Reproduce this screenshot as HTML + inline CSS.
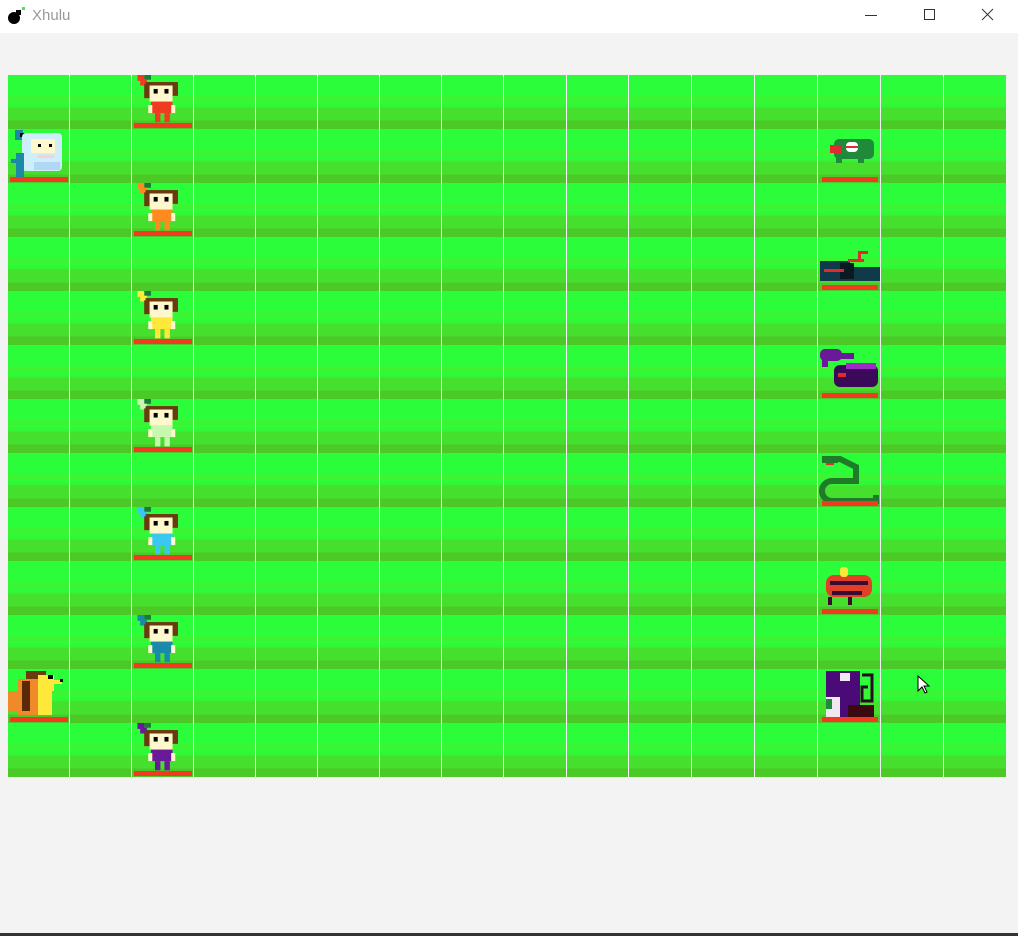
<!DOCTYPE html>
<html><head><meta charset="utf-8"><style>
html,body{margin:0;padding:0;background:#f3f3f3;width:1018px;height:936px;overflow:hidden;font-family:"Liberation Sans",sans-serif;position:relative}
.tb{position:absolute;left:0;top:0;width:1018px;height:33px;background:#fff}
.title{position:absolute;left:32px;top:7px;font-size:15px;color:#999}
.col{position:absolute;top:75px;height:702px;background-image:linear-gradient(#2bfd3a 0,#2bfd3a 40%,#3df332 40%,#3df332 50%,#2bfd3a 50%,#36f235 60%,#45df2d 60%,#45df2d 84%,#4bc927 84%,#4bc927 100%);background-size:100% 54px}
.s{position:absolute;width:62px;height:54px}
.bot{position:absolute;left:0;top:933px;width:1018px;height:3px;background:#333}
</style></head><body>
<div class="tb">
<svg style="position:absolute;left:6px;top:6px" width="22" height="20"><circle cx="8" cy="12" r="6" fill="#000"/><rect x="10" y="4" width="5" height="5" fill="#000"/><rect x="16" y="1" width="3" height="3" fill="#5d5"/></svg>
<div class="title">Xhulu</div>
<svg style="position:absolute;left:864px;top:8px" width="140" height="16"><line x1="1" y1="7.5" x2="13" y2="7.5" stroke="#333"/><rect x="60.5" y="1.5" width="10" height="10" fill="none" stroke="#333"/><path d="M118 1L129 12M129 1L118 12" stroke="#333"/></svg>
</div>
<div class="col" style="left:8px;width:61px"></div>
<div class="col" style="left:70px;width:61px"></div>
<div class="col" style="left:132px;width:61px"></div>
<div class="col" style="left:194px;width:61px"></div>
<div class="col" style="left:256px;width:61px"></div>
<div class="col" style="left:318px;width:61px"></div>
<div class="col" style="left:380px;width:61px"></div>
<div class="col" style="left:442px;width:61px"></div>
<div class="col" style="left:504px;width:62px"></div>
<div class="col" style="left:567px;width:61px"></div>
<div class="col" style="left:629px;width:62px"></div>
<div class="col" style="left:692px;width:62px"></div>
<div class="col" style="left:755px;width:62px"></div>
<div class="col" style="left:818px;width:62px"></div>
<div class="col" style="left:881px;width:62px"></div>
<div class="col" style="left:944px;width:62px"></div>

<!-- people -->
<svg class="s" style="left:132px;top:75px;color:#f03a22" viewBox="0 0 62 54"><g transform="translate(-4,-1) scale(1.35,1.15)"><rect x="12" y="0" width="5" height="5" fill="#1a7a3a"/><rect x="7" y="0" width="5" height="6" fill="currentColor"/><rect x="9" y="5" width="5" height="5" fill="currentColor"/><rect x="13" y="7" width="24" height="3" fill="#6b3a10"/><rect x="12" y="9" width="4" height="12" fill="#6b3a10"/><rect x="33" y="9" width="4" height="10" fill="#6b3a10"/><rect x="16" y="10" width="17" height="14" fill="#fff8cc"/><rect x="19" y="13" width="3" height="4" fill="#000"/><rect x="27" y="13" width="3" height="4" fill="#000"/><rect x="17" y="24" width="16" height="10" fill="currentColor"/><rect x="15" y="27" width="3" height="7" fill="#fff8cc"/><rect x="32" y="27" width="3" height="7" fill="#fff8cc"/><rect x="20" y="34" width="4" height="8" fill="currentColor"/><rect x="27" y="34" width="4" height="8" fill="currentColor"/></g><rect x="2" y="48" width="58" height="5" fill="#f03a22"/></svg>
<svg class="s" style="left:132px;top:183px;color:#ff8a20" viewBox="0 0 62 54"><g transform="translate(-4,-1) scale(1.35,1.15)"><rect x="12" y="0" width="5" height="5" fill="#1a7a3a"/><rect x="7" y="0" width="5" height="6" fill="currentColor"/><rect x="9" y="5" width="5" height="5" fill="currentColor"/><rect x="13" y="7" width="24" height="3" fill="#6b3a10"/><rect x="12" y="9" width="4" height="12" fill="#6b3a10"/><rect x="33" y="9" width="4" height="10" fill="#6b3a10"/><rect x="16" y="10" width="17" height="14" fill="#fff8cc"/><rect x="19" y="13" width="3" height="4" fill="#000"/><rect x="27" y="13" width="3" height="4" fill="#000"/><rect x="17" y="24" width="16" height="10" fill="currentColor"/><rect x="15" y="27" width="3" height="7" fill="#fff8cc"/><rect x="32" y="27" width="3" height="7" fill="#fff8cc"/><rect x="20" y="34" width="4" height="8" fill="currentColor"/><rect x="27" y="34" width="4" height="8" fill="currentColor"/></g><rect x="2" y="48" width="58" height="5" fill="#f03a22"/></svg>
<svg class="s" style="left:132px;top:291px;color:#ffe83a" viewBox="0 0 62 54"><g transform="translate(-4,-1) scale(1.35,1.15)"><rect x="12" y="0" width="5" height="5" fill="#1a7a3a"/><rect x="7" y="0" width="5" height="6" fill="currentColor"/><rect x="9" y="5" width="5" height="5" fill="currentColor"/><rect x="13" y="7" width="24" height="3" fill="#6b3a10"/><rect x="12" y="9" width="4" height="12" fill="#6b3a10"/><rect x="33" y="9" width="4" height="10" fill="#6b3a10"/><rect x="16" y="10" width="17" height="14" fill="#fff8cc"/><rect x="19" y="13" width="3" height="4" fill="#000"/><rect x="27" y="13" width="3" height="4" fill="#000"/><rect x="17" y="24" width="16" height="10" fill="currentColor"/><rect x="15" y="27" width="3" height="7" fill="#fff8cc"/><rect x="32" y="27" width="3" height="7" fill="#fff8cc"/><rect x="20" y="34" width="4" height="8" fill="currentColor"/><rect x="27" y="34" width="4" height="8" fill="currentColor"/></g><rect x="2" y="48" width="58" height="5" fill="#f03a22"/></svg>
<svg class="s" style="left:132px;top:399px;color:#c8f8b0" viewBox="0 0 62 54"><g transform="translate(-4,-1) scale(1.35,1.15)"><rect x="12" y="0" width="5" height="5" fill="#1a7a3a"/><rect x="7" y="0" width="5" height="6" fill="currentColor"/><rect x="9" y="5" width="5" height="5" fill="currentColor"/><rect x="13" y="7" width="24" height="3" fill="#6b3a10"/><rect x="12" y="9" width="4" height="12" fill="#6b3a10"/><rect x="33" y="9" width="4" height="10" fill="#6b3a10"/><rect x="16" y="10" width="17" height="14" fill="#fff8cc"/><rect x="19" y="13" width="3" height="4" fill="#000"/><rect x="27" y="13" width="3" height="4" fill="#000"/><rect x="17" y="24" width="16" height="10" fill="currentColor"/><rect x="15" y="27" width="3" height="7" fill="#fff8cc"/><rect x="32" y="27" width="3" height="7" fill="#fff8cc"/><rect x="20" y="34" width="4" height="8" fill="currentColor"/><rect x="27" y="34" width="4" height="8" fill="currentColor"/></g><rect x="2" y="48" width="58" height="5" fill="#f03a22"/></svg>
<svg class="s" style="left:132px;top:507px;color:#3ac8f0" viewBox="0 0 62 54"><g transform="translate(-4,-1) scale(1.35,1.15)"><rect x="12" y="0" width="5" height="5" fill="#1a7a3a"/><rect x="7" y="0" width="5" height="6" fill="currentColor"/><rect x="9" y="5" width="5" height="5" fill="currentColor"/><rect x="13" y="7" width="24" height="3" fill="#6b3a10"/><rect x="12" y="9" width="4" height="12" fill="#6b3a10"/><rect x="33" y="9" width="4" height="10" fill="#6b3a10"/><rect x="16" y="10" width="17" height="14" fill="#fff8cc"/><rect x="19" y="13" width="3" height="4" fill="#000"/><rect x="27" y="13" width="3" height="4" fill="#000"/><rect x="17" y="24" width="16" height="10" fill="currentColor"/><rect x="15" y="27" width="3" height="7" fill="#fff8cc"/><rect x="32" y="27" width="3" height="7" fill="#fff8cc"/><rect x="20" y="34" width="4" height="8" fill="currentColor"/><rect x="27" y="34" width="4" height="8" fill="currentColor"/></g><rect x="2" y="48" width="58" height="5" fill="#f03a22"/></svg>
<svg class="s" style="left:132px;top:615px;color:#1a8aa8" viewBox="0 0 62 54"><g transform="translate(-4,-1) scale(1.35,1.15)"><rect x="12" y="0" width="5" height="5" fill="#1a7a3a"/><rect x="7" y="0" width="5" height="6" fill="currentColor"/><rect x="9" y="5" width="5" height="5" fill="currentColor"/><rect x="13" y="7" width="24" height="3" fill="#6b3a10"/><rect x="12" y="9" width="4" height="12" fill="#6b3a10"/><rect x="33" y="9" width="4" height="10" fill="#6b3a10"/><rect x="16" y="10" width="17" height="14" fill="#fff8cc"/><rect x="19" y="13" width="3" height="4" fill="#000"/><rect x="27" y="13" width="3" height="4" fill="#000"/><rect x="17" y="24" width="16" height="10" fill="currentColor"/><rect x="15" y="27" width="3" height="7" fill="#fff8cc"/><rect x="32" y="27" width="3" height="7" fill="#fff8cc"/><rect x="20" y="34" width="4" height="8" fill="currentColor"/><rect x="27" y="34" width="4" height="8" fill="currentColor"/></g><rect x="2" y="48" width="58" height="5" fill="#f03a22"/></svg>
<svg class="s" style="left:132px;top:723px;color:#6a1a98" viewBox="0 0 62 54"><g transform="translate(-4,-1) scale(1.35,1.15)"><rect x="12" y="0" width="5" height="5" fill="#1a7a3a"/><rect x="7" y="0" width="5" height="6" fill="currentColor"/><rect x="9" y="5" width="5" height="5" fill="currentColor"/><rect x="13" y="7" width="24" height="3" fill="#6b3a10"/><rect x="12" y="9" width="4" height="12" fill="#6b3a10"/><rect x="33" y="9" width="4" height="10" fill="#6b3a10"/><rect x="16" y="10" width="17" height="14" fill="#fff8cc"/><rect x="19" y="13" width="3" height="4" fill="#000"/><rect x="27" y="13" width="3" height="4" fill="#000"/><rect x="17" y="24" width="16" height="10" fill="currentColor"/><rect x="15" y="27" width="3" height="7" fill="#fff8cc"/><rect x="32" y="27" width="3" height="7" fill="#fff8cc"/><rect x="20" y="34" width="4" height="8" fill="currentColor"/><rect x="27" y="34" width="4" height="8" fill="currentColor"/></g><rect x="2" y="48" width="58" height="5" fill="#f03a22"/></svg>

<!-- ghost -->
<svg class="s" style="left:8px;top:129px" viewBox="0 0 62 54"><rect x="7" y="1" width="8" height="10" fill="#1a8aa8"/><rect x="12" y="4" width="5" height="4" fill="#000"/><rect x="14" y="4" width="40" height="38" rx="4" fill="#cfeefc" /><rect x="23" y="10" width="24" height="14" fill="#fff8cc"/><rect x="30" y="15" width="3" height="3" fill="#000"/><rect x="41" y="15" width="3" height="3" fill="#000"/><rect x="30" y="26" width="16" height="3" fill="#f8d0d0"/><rect x="3" y="30" width="8" height="4" fill="#1a8aa8"/><rect x="8" y="24" width="8" height="24" fill="#1a8aa8"/><rect x="26" y="33" width="26" height="8" fill="#b0d8f4"/><rect x="2" y="48" width="58" height="5" fill="#f03a22"/></svg>
<!-- dino -->
<svg class="s" style="left:8px;top:669px" viewBox="0 0 62 54"><rect x="18" y="2" width="20" height="10" fill="#6b3a10"/><rect x="10" y="10" width="22" height="36" fill="#f08a28"/><rect x="0" y="22" width="14" height="20" fill="#f08a28"/><rect x="14" y="12" width="8" height="30" fill="#5a2a08"/><rect x="30" y="6" width="16" height="16" fill="#ffe83a"/><rect x="40" y="6" width="5" height="4" fill="#000"/><rect x="46" y="11" width="8" height="4" fill="#ffe83a"/><rect x="52" y="10" width="3" height="3" fill="#000"/><rect x="30" y="22" width="14" height="24" fill="#ffe83a"/><rect x="2" y="48" width="58" height="5" fill="#f03a22"/></svg>

<!-- monsters col 13 -->
<svg class="s" style="left:818px;top:129px" viewBox="0 0 62 54"><rect x="16" y="10" width="40" height="20" rx="5" fill="#1f8a3a"/><rect x="12" y="16" width="12" height="8" fill="#e02a30"/><rect x="28" y="13" width="12" height="10" rx="4" fill="#fff"/><rect x="28" y="17" width="12" height="2" fill="#e02a30"/><rect x="18" y="28" width="6" height="6" fill="#1f8a3a"/><rect x="40" y="28" width="6" height="6" fill="#1f8a3a"/><rect x="4" y="48" width="56" height="5" fill="#f03a22"/></svg>
<svg class="s" style="left:818px;top:237px" viewBox="0 0 62 54"><rect x="2" y="30" width="60" height="14" fill="#0e3a4a"/><rect x="2" y="24" width="30" height="8" fill="#0e3a4a"/><rect x="22" y="26" width="14" height="16" fill="#0a1a20"/><rect x="6" y="32" width="20" height="3" fill="#e02a30"/><rect x="30" y="22" width="16" height="3" fill="#e02a30"/><rect x="40" y="14" width="3" height="10" fill="#e02a30"/><rect x="40" y="14" width="10" height="3" fill="#e02a30"/><rect x="4" y="48" width="56" height="5" fill="#f03a22"/></svg>
<svg class="s" style="left:818px;top:345px" viewBox="0 0 62 54"><rect x="2" y="4" width="22" height="12" rx="5" fill="#6a1a98"/><rect x="4" y="14" width="6" height="8" fill="#6a1a98"/><rect x="22" y="8" width="14" height="6" fill="#6a1a98"/><rect x="16" y="20" width="44" height="22" rx="6" fill="#3a0a58"/><rect x="28" y="18" width="30" height="6" fill="#a02ac8"/><rect x="20" y="28" width="8" height="4" fill="#e02a30"/><rect x="4" y="48" width="56" height="5" fill="#f03a22"/></svg>
<svg class="s" style="left:818px;top:453px" viewBox="0 0 62 54"><path d="M4 6h18l16 8v14H14a10 10 0 0 0 0 20h44v-6" fill="none" stroke="#1f7a2a" stroke-width="6"/><rect x="4" y="4" width="16" height="6" fill="#1f7a2a"/><rect x="8" y="10" width="8" height="2" fill="#e02a30"/><rect x="4" y="48" width="56" height="5" fill="#f03a22"/></svg>
<svg class="s" style="left:818px;top:561px" viewBox="0 0 62 54"><rect x="8" y="14" width="46" height="22" rx="8" fill="#e04028"/><rect x="12" y="20" width="38" height="4" fill="#3a0a30"/><rect x="14" y="30" width="30" height="4" fill="#3a0a30"/><rect x="22" y="6" width="8" height="10" rx="3" fill="#f8e83a"/><rect x="10" y="36" width="4" height="8" fill="#3a0a30"/><rect x="30" y="36" width="4" height="8" fill="#3a0a30"/><rect x="4" y="48" width="56" height="5" fill="#f03a22"/></svg>
<svg class="s" style="left:818px;top:669px" viewBox="0 0 62 54"><rect x="8" y="2" width="34" height="46" fill="#4a0a78"/><rect x="22" y="4" width="10" height="8" fill="#f0e8f0"/><rect x="8" y="28" width="14" height="20" fill="#f0e8f0"/><rect x="8" y="30" width="6" height="10" fill="#1f8a3a"/><rect x="30" y="36" width="26" height="12" fill="#3a0a10"/><path d="M44 6h10v26h-10v-14h6" fill="none" stroke="#2a0a20" stroke-width="3"/><rect x="4" y="48" width="56" height="5" fill="#f03a22"/></svg>

<svg style="position:absolute;left:917px;top:675px" width="14" height="20"><path d="M1 1v15l4-4 3 6 2-1-3-6h5z" fill="#fff" stroke="#000"/></svg>
<div class="bot"></div>
</body></html>
